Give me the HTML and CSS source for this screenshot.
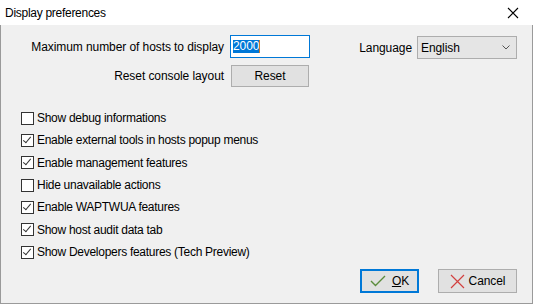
FILE: index.html
```html
<!DOCTYPE html>
<html lang="en">

<head>
    <meta charset="UTF-8">
    <meta name="viewport" content="width=device-width, initial-scale=1.0">
    <title>Display preferences</title>
    <link rel="stylesheet" href="styles.css">
</head>

<body>
    <div class="window">
        <div class="titlebar">
            <span class="title">Display preferences</span>
            <svg class="close" width="12" height="12" viewBox="0 0 12 12">
                <path d="M1 1 L11 11 M11 1 L1 11" stroke="#000" stroke-width="1.1" fill="none"/>
            </svg>
        </div>

        <div class="content">
            <div class="top">
                <div class="fields">
                    <label class="field-label">Maximum number of hosts to display</label>
                    <div class="input"><span class="selected">2000</span><span class="caret"></span></div>
                    <label class="field-label">Reset console layout</label>
                    <button class="btn reset">Reset</button>
                </div>
                <div class="lang">
                    <label>Language</label>
                    <div class="select">
                        <span>English</span>
                        <svg width="8" height="5" viewBox="0 0 8 5">
                            <path d="M0.5 0.5 L4 4 L7.5 0.5" stroke="#555" stroke-width="1" fill="none"/>
                        </svg>
                    </div>
                </div>
            </div>

            <div class="checks">
                <div class="check"><span class="box"></span>Show debug informations</div>
                <div class="check"><span class="box on"></span>Enable external tools in hosts popup menus</div>
                <div class="check"><span class="box on"></span>Enable management features</div>
                <div class="check"><span class="box"></span>Hide unavailable actions</div>
                <div class="check"><span class="box on"></span>Enable WAPTWUA features</div>
                <div class="check"><span class="box on"></span>Show host audit data tab</div>
                <div class="check"><span class="box on"></span>Show Developers features (Tech Preview)</div>
            </div>

            <div class="actions">
                <button class="btn ok">
                    <svg width="16" height="12" viewBox="0 0 16 12">
                        <path d="M1 6 L5.5 10.5 L15 1" stroke="#5b8c3c" stroke-width="1.4" fill="none"/>
                    </svg>
                    <span><u>O</u>K</span>
                </button>
                <button class="btn cancel">
                    <svg width="15" height="15" viewBox="0 0 15 15">
                        <path d="M1 1 L14 14 M14 1 L1 14" stroke="#d2403f" stroke-width="1.2" fill="none"/>
                    </svg>
                    <span>Cancel</span>
                </button>
            </div>
        </div>
    </div>
</body>

</html>
```

FILE: styles.css
```css
body {
    margin: 0;
    font-family: "Liberation Sans", Arial, sans-serif;
    font-size: 12px;
    letter-spacing: -0.08px;
    color: #000;
    background-color: #f0f0f0;
}

.window {
    width: 533px;
    height: 304px;
    display: flex;
    flex-direction: column;
    box-sizing: border-box;
}

.titlebar {
    height: 25px;
    background-color: #fff;
    display: flex;
    align-items: center;
    justify-content: space-between;
    padding: 0 14px 0 5px;
    flex-shrink: 0;
}

.title {
    font-size: 12px;
    letter-spacing: -0.28px;
}

.close {
    margin-top: 1px;
}

.content {
    flex: 1;
    background-color: #f0f0f0;
    border: 1px solid #9a9a9a;
    border-top: none;
    display: flex;
    flex-direction: column;
}

.top {
    display: flex;
    justify-content: space-between;
    padding-top: 10px;
}

.fields {
    display: grid;
    grid-template-columns: 203px 80px;
    column-gap: 6px;
    row-gap: 7px;
    margin-left: 20px;
    align-items: center;
}

.field-label {
    text-align: right;
}

.input {
    height: 23px;
    box-sizing: border-box;
    border: 1px solid #0078d7;
    background-color: #fff;
    display: flex;
    align-items: center;
    padding-left: 2px;
}

.selected {
    background-color: #0078d7;
    color: #fff;
    line-height: 13px;
}

.caret {
    width: 1px;
    height: 13px;
    background-color: #c87a2a;
}

.btn {
    font-family: inherit;
    font-size: 12px;
    letter-spacing: inherit;
    color: #000;
    background-color: #e1e1e1;
    border: 1px solid #adadad;
    box-sizing: border-box;
    display: flex;
    align-items: center;
    justify-content: center;
    padding: 0;
}

.reset {
    width: 78px;
    height: 22px;
    margin-left: 1px;
}

.lang {
    display: flex;
    align-items: center;
    gap: 5px;
    margin-right: 15px;
    margin-top: 1px;
    height: 23px;
}

.select {
    width: 100px;
    height: 23px;
    box-sizing: border-box;
    background-color: #e5e5e5;
    border: 1px solid #adadad;
    display: flex;
    align-items: center;
    justify-content: space-between;
    padding: 0 6px 0 3px;
}

.checks {
    margin-top: 20px;
    margin-left: 20px;
    display: flex;
    flex-direction: column;
    letter-spacing: -0.28px;
}

.check {
    height: 22.33px;
    display: flex;
    align-items: center;
    gap: 3px;
}

.box {
    width: 13px;
    height: 13px;
    box-sizing: border-box;
    border: 1px solid #333;
    background-color: #fff;
    position: relative;
}

.box.on::after {
    content: "";
    position: absolute;
    left: 3px;
    top: 0px;
    width: 3px;
    height: 7px;
    border: solid #333;
    border-width: 0 1px 1px 0;
    transform: rotate(40deg);
}

.actions {
    margin-top: auto;
    margin-bottom: 10px;
    margin-right: 15px;
    display: flex;
    justify-content: flex-end;
    gap: 19px;
}

.ok {
    width: 59px;
    height: 24px;
    border: 2px solid #0078d7;
    gap: 6px;
}

.cancel {
    width: 79px;
    height: 24px;
    gap: 4px;
}
```
